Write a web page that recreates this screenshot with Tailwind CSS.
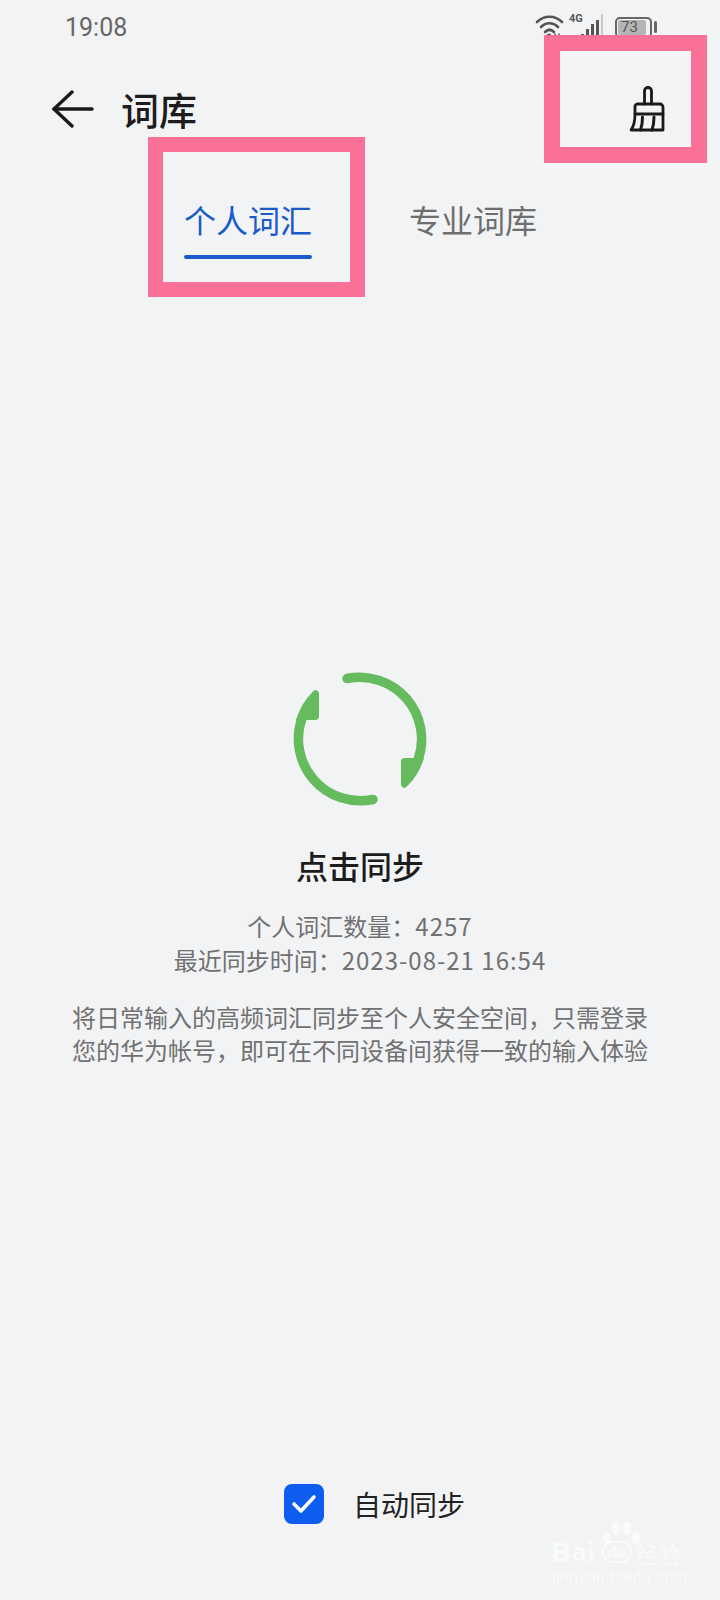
<!DOCTYPE html>
<html lang="zh-CN">
  <head>
    <meta charset="UTF-8" />
    <title>词库</title>
    <script src="https://cdn.jsdelivr.net/npm/@tailwindcss/browser@4"></script>
  </head>
  <body class="bg-[#f2f3f5]">
    <div class="relative w-[720px] h-[1600px] overflow-hidden flex flex-col bg-[#f2f3f5] font-['Noto_Sans_CJK_SC','Noto_Sans',sans-serif]">
      <!-- status bar -->
      <div class="h-[54px] flex items-center pl-[65px] pr-[63px] justify-between">
        <span class="text-[25px] leading-none text-[#666666] font-['Roboto',sans-serif]">19:08</span>
        <div class="flex items-center h-[40px]">
          <svg class="w-[30px] h-[26px]" viewBox="0 0 30 26" fill="none" stroke="#555555" stroke-width="2.6" stroke-linecap="round">
            <path d="M2 8C9 1 20 1 27 8" />
            <path d="M6 13C11 8 18 8 23 13" />
            <path d="M10 18C13 15 16 15 19 18" />
            <circle cx="14" cy="22" r="2.5" fill="#555555" stroke="none" />
            <path d="M20 20v5M24 20v5" stroke-width="1.5" />
          </svg>
          <div class="relative w-[36px] h-[26px] ml-[2px]">
            <span class="absolute left-[2px] top-[-2px] text-[11px] font-bold leading-[14px] text-[#555555] font-['Roboto',sans-serif]">4G</span>
            <div class="absolute left-[14px] bottom-0 flex items-end gap-[2px]">
              <div class="w-[3px] h-[6px] bg-[#555555]"></div>
              <div class="w-[3px] h-[11px] bg-[#555555]"></div>
              <div class="w-[3px] h-[16px] bg-[#555555]"></div>
              <div class="w-[3px] h-[20px] bg-[#555555]"></div>
              <div class="w-[2px] h-[26px] bg-[#c9c9c9]"></div>
            </div>
          </div>
          <div class="ml-[12px] w-[37px] h-[21px] rounded-[5px] border-2 border-[#666666] p-[1px] flex">
            <div class="w-[28px] bg-[#b5b5b5] rounded-[2px] flex items-center justify-start pl-[3px]">
              <span class="text-[15px] leading-none text-[#555555] font-['Roboto',sans-serif]">73</span>
            </div>
          </div>
          <div class="ml-[2px] w-[3px] h-[12px] rounded-full bg-[#666666]"></div>
        </div>
      </div>

      <!-- title bar -->
      <div class="mt-[28px] h-[54px] flex items-center pl-[52px] pr-[55px] justify-between">
        <div class="flex items-center">
          <svg class="w-[42px] h-[38px]" viewBox="0 0 42 38" fill="none" stroke="#1a1a1a" stroke-width="3.4" stroke-linecap="round" stroke-linejoin="round">
            <path d="M20 2L2 19L20 36" />
            <path d="M2 19H40" />
          </svg>
          <span class="ml-[27px] text-[38px] leading-none font-medium text-[#1c1c1c]">词库</span>
        </div>
        <svg class="w-[36px] h-[46px]" viewBox="0 0 36 46" fill="none" stroke="#1a1a1a" stroke-width="2.8" stroke-linecap="round" stroke-linejoin="round">
          <path d="M15.5 18V5a3.5 3.5 0 0 1 7 0V18" />
          <path d="M8 18H31a3 3 0 0 1 3 3V28H6V20a3 3 0 0 1 2-2Z" />
          <path d="M6 28C6 35 5 40 2 44H34V28" />
          <path d="M13.5 31C13.5 36 13 40 11.5 44" stroke-width="3" />
          <path d="M25 31C25 36 24.5 40 23 44" stroke-width="3" />
        </svg>
      </div>

      <!-- tabs -->
      <div class="mt-[60px] flex pl-[184px]">
        <div class="flex flex-col w-[128px]">
          <span class="text-[32px] leading-[46px] text-[#1b5bc9] text-center">个人词汇</span>
          <div class="mt-[13px] h-[4px] rounded-full bg-[#1b5bc9]"></div>
        </div>
        <span class="ml-[97px] text-[32px] leading-[46px] text-[#6e6e6e]">专业词库</span>
      </div>

      <!-- sync block -->
      <div class="mt-[413px] flex flex-col items-center">
        <svg class="w-[134px] h-[134px]" viewBox="0 0 134 134" fill="none">
          <path d="M54 6.5A62 62 0 0 1 125 88" stroke="#66bb5f" stroke-width="9.5" stroke-linecap="round" />
          <path d="M80 127.5A62 62 0 0 1 9 46" stroke="#66bb5f" stroke-width="9.5" stroke-linecap="round" />
          <path d="M108 90Q108 86 112 86H131A66.75 66.75 0 0 1 114 114.5Q110 118 108 113Z" fill="#66bb5f" />
          <path d="M26 44Q26 48 22 48H3A66.75 66.75 0 0 1 20 19.5Q24 16 26 21Z" fill="#66bb5f" />
        </svg>
        <p class="mt-[36px] text-[32px] leading-[46px] font-medium text-[#1c1c1c]">点击同步</p>
        <p class="mt-[21px] text-[24px] leading-[34px] text-[#717171]">个人词汇数量：<span class="tracking-[1px]">4257</span></p>
        <p class="text-[24px] leading-[34px] text-[#717171]">最近同步时间：<span class="tracking-[1px]">2023-08-21 16:54</span></p>
        <p class="mt-[23px] text-[24px] leading-[33px] text-[#717171] text-center">将日常输入的高频词汇同步至个人安全空间，只需登录<br />您的华为帐号，即可在不同设备间获得一致的输入体验</p>
      </div>

      <!-- auto sync -->
      <div class="mt-auto mb-[76px] flex items-center pl-[284px]">
        <div class="w-[40px] h-[40px] rounded-[8px] bg-[#0f5df0] flex items-center justify-center">
          <svg class="w-[26px] h-[22px]" viewBox="0 0 26 22" fill="none" stroke="#ffffff" stroke-width="3.6" stroke-linecap="round" stroke-linejoin="round">
            <path d="M3 11L10 18L23 4" />
          </svg>
        </div>
        <span class="ml-[29px] text-[28px] leading-none text-[#222222]">自动同步</span>
      </div>

      <!-- annotation boxes over the screenshot -->
      <div class="absolute left-[148px] top-[137px] w-[217px] h-[160px] border-[15px] border-[#fb7097]"></div>
      <div class="absolute left-[544px] top-[35px] w-[163px] h-[128px] border-[16px] border-[#fb7097]"></div>

      <!-- watermark -->
      <div class="absolute left-[552px] top-[1520px] w-[130px] h-[66px] text-white/60">
        <svg class="absolute left-[50px] top-0 w-[40px] h-[26px]" viewBox="0 0 40 26" fill="#ffffff" fill-opacity="0.6">
          <ellipse cx="5" cy="18" rx="4.5" ry="6" />
          <ellipse cx="14" cy="8" rx="4.5" ry="6.5" />
          <ellipse cx="25" cy="8" rx="4.5" ry="6.5" />
          <ellipse cx="34" cy="18" rx="4.5" ry="6" />
        </svg>
        <span class="absolute left-0 top-[17px] text-[26px] leading-[30px] font-bold tracking-[1px] font-['Liberation_Sans',sans-serif]">Bai</span>
        <span class="absolute left-[50px] top-[21px] w-[30px] h-[22px] rounded-full border-2 border-white/60 text-[15px] leading-[17px] text-center font-bold font-['Liberation_Sans',sans-serif]">du</span>
        <span class="absolute left-[84px] top-[19px] text-[22px] leading-[28px]">经验</span>
        <span class="absolute left-0 top-[47px] text-[15.5px] leading-[20px] tracking-[0.6px] font-['Liberation_Sans',sans-serif]">jingyan.baidu.com</span>
      </div>
    </div>
  </body>
</html>
